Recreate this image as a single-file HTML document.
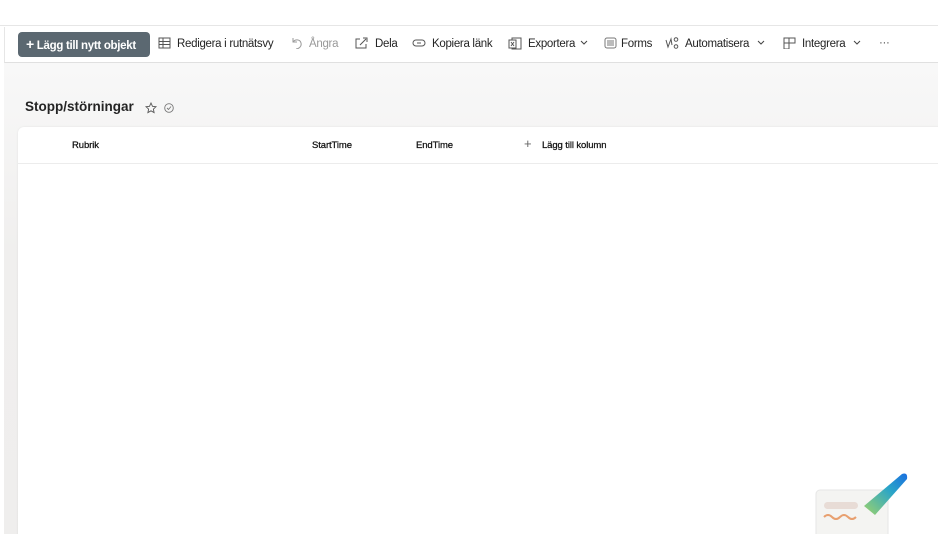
<!DOCTYPE html>
<html><head><meta charset="utf-8"><style>
*{margin:0;padding:0;box-sizing:border-box}
html,body{width:938px;height:534px;overflow:hidden}
body{background:#fff;font-family:"Liberation Sans",sans-serif;position:relative;color:#242424}
.top{position:absolute;left:0;top:0;width:938px;height:26px;background:#fff;border-bottom:1px solid #e6e6e6}
.bar{position:absolute;left:4px;top:27px;width:934px;height:36px;background:#fff;border-bottom:1px solid #e0e0e0;border-left:1px solid #e6e6e6}
.bg{position:absolute;left:4px;top:63px;width:934px;height:471px;background:linear-gradient(#f8f8f8,#f0efee 40%,#efeeed)}
.card{position:absolute;left:18px;top:127px;width:930px;height:420px;background:#fff;border-radius:6px 0 0 0;box-shadow:0 0 2px rgba(0,0,0,.08)}
.hdr{position:absolute;left:0;top:0;width:100%;height:37px;border-bottom:1px solid #ececec;font-size:9.5px;letter-spacing:-0.1px;color:#111;-webkit-text-stroke:0.25px #111}
.hdr span{position:absolute;top:13px}
.btn{position:absolute;left:18px;top:32px;width:132px;height:25px;background:#5b6871;border-radius:4px;color:#fff;font-size:11.5px;font-weight:700;line-height:25px;padding-left:8px;letter-spacing:-0.3px;white-space:nowrap}
.it{position:absolute;top:37px;font-size:11.5px;color:#242424;white-space:nowrap;letter-spacing:-0.3px}
.ic{position:absolute;top:0}
.lb{position:absolute;top:1px}
h1{position:absolute;left:25px;top:99px;font-size:13.5px;font-weight:700;color:#242424;letter-spacing:0;white-space:nowrap}
</style></head><body>
<div class="top"></div>
<div class="bar"></div>
<div class="bg"></div>
<div class="btn"><span style="font-size:14px">+</span> Lägg till nytt objekt</div>
<div class="it" style="left:158px"><svg class="ic" width="13" height="12"><rect x="1" y="1" width="11" height="10" fill="none" stroke="#555"/><path d="M1 4.5h11M1 7.5h11M5 1v10" stroke="#555"/></svg><span class="lb" style="left:19px">Redigera i rutnätsvy</span></div>
<div class="it" style="left:291px;color:#999"><svg class="ic" width="13" height="12"><path d="M2 1v4h4M2 5c2-3 7-3 8 1s-3 6-5 6" fill="none" stroke="#999"/></svg><span class="lb" style="left:18px">Ångra</span></div>
<div class="it" style="left:355px"><svg class="ic" width="13" height="12"><path d="M5 2H1v9h10V7M5 8l6-6M8 1h4v4" fill="none" stroke="#555"/></svg><span class="lb" style="left:20px">Dela</span></div>
<div class="it" style="left:412px"><svg class="ic" width="14" height="12"><rect x="1" y="3" width="12" height="6" rx="3" fill="none" stroke="#555"/><path d="M5 6h4" stroke="#555"/></svg><span class="lb" style="left:20px">Kopiera länk</span></div>
<div class="it" style="left:508px"><svg class="ic" width="14" height="13"><rect x="4" y="1" width="9" height="11" fill="none" stroke="#555"/><rect x="1" y="3" width="7" height="8" fill="#fff" stroke="#555"/><path d="M3 5l3 4M6 5l-3 4" stroke="#555"/></svg><span class="lb" style="left:20px">Exportera</span><svg class="ic" style="left:72px;top:3px" width="8" height="6"><path d="M1 1l3 3 3-3" fill="none" stroke="#444"/></svg></div>
<div class="it" style="left:604px"><svg class="ic" width="13" height="12"><rect x="1" y="1" width="11" height="10" rx="2" fill="none" stroke="#777"/><path d="M3 4h7M3 6h7M3 8h7" stroke="#777"/></svg><span class="lb" style="left:17px">Forms</span></div>
<div class="it" style="left:665px"><svg class="ic" width="14" height="12"><circle cx="11" cy="2.5" r="1.8" fill="none" stroke="#555"/><circle cx="11" cy="9.5" r="1.8" fill="none" stroke="#555"/><path d="M1 3l2 7 3-8 1 6" fill="none" stroke="#555"/></svg><span class="lb" style="left:20px">Automatisera</span><svg class="ic" style="left:92px;top:3px" width="8" height="6"><path d="M1 1l3 3 3-3" fill="none" stroke="#444"/></svg></div>
<div class="it" style="left:783px"><svg class="ic" width="13" height="12"><path d="M1 1h11v5H6v6H1z M6 1v5M1 6h5" fill="none" stroke="#555"/></svg><span class="lb" style="left:19px">Integrera</span><svg class="ic" style="left:70px;top:3px" width="8" height="6"><path d="M1 1l3 3 3-3" fill="none" stroke="#444"/></svg></div>
<div class="it" style="left:879px;color:#555">···</div>
<h1>Stopp/störningar</h1>
<svg style="position:absolute;left:145px;top:102px" width="30" height="12"><path d="M6 1l1.5 3.3 3.5.4-2.6 2.4.7 3.5L6 8.8 2.9 10.6l.7-3.5L1 4.7l3.5-.4z" fill="none" stroke="#555" stroke-width=".9"/><circle cx="24" cy="6" r="4.3" fill="none" stroke="#777" stroke-width=".9"/><path d="M22 6l1.5 1.5 2.5-3" fill="none" stroke="#777" stroke-width=".9"/></svg>
<div class="card"><div class="hdr">
<span style="left:54px">Rubrik</span><span style="left:294px">StartTime</span><span style="left:398px">EndTime</span><span style="left:506px;font-size:13px;top:9px;color:#666;-webkit-text-stroke:0">+</span><span style="left:524px">Lägg till kolumn</span>
</div></div>
<svg style="position:absolute;left:812px;top:470px" width="100" height="64">
<rect x="4" y="20" width="72" height="50" rx="4" fill="#f4f4f2" stroke="#e6e6e6"/>
<rect x="12" y="32" width="34" height="7" rx="3.5" fill="#e8dcd6"/>
<path d="M12 47q4-4 8 0t8 0 8 0 8 0" fill="none" stroke="#e8a070" stroke-width="2"/>
<path d="M52 36l38-32q6-2 5 5l-32 36z" fill="url(#g)"/>
<defs><linearGradient id="g" x1="0" y1="1" x2="1" y2="0"><stop offset="0" stop-color="#9ed36a"/><stop offset=".6" stop-color="#2aa5c8"/><stop offset="1" stop-color="#1a6fe0"/></linearGradient></defs>
</svg>
</body></html>
